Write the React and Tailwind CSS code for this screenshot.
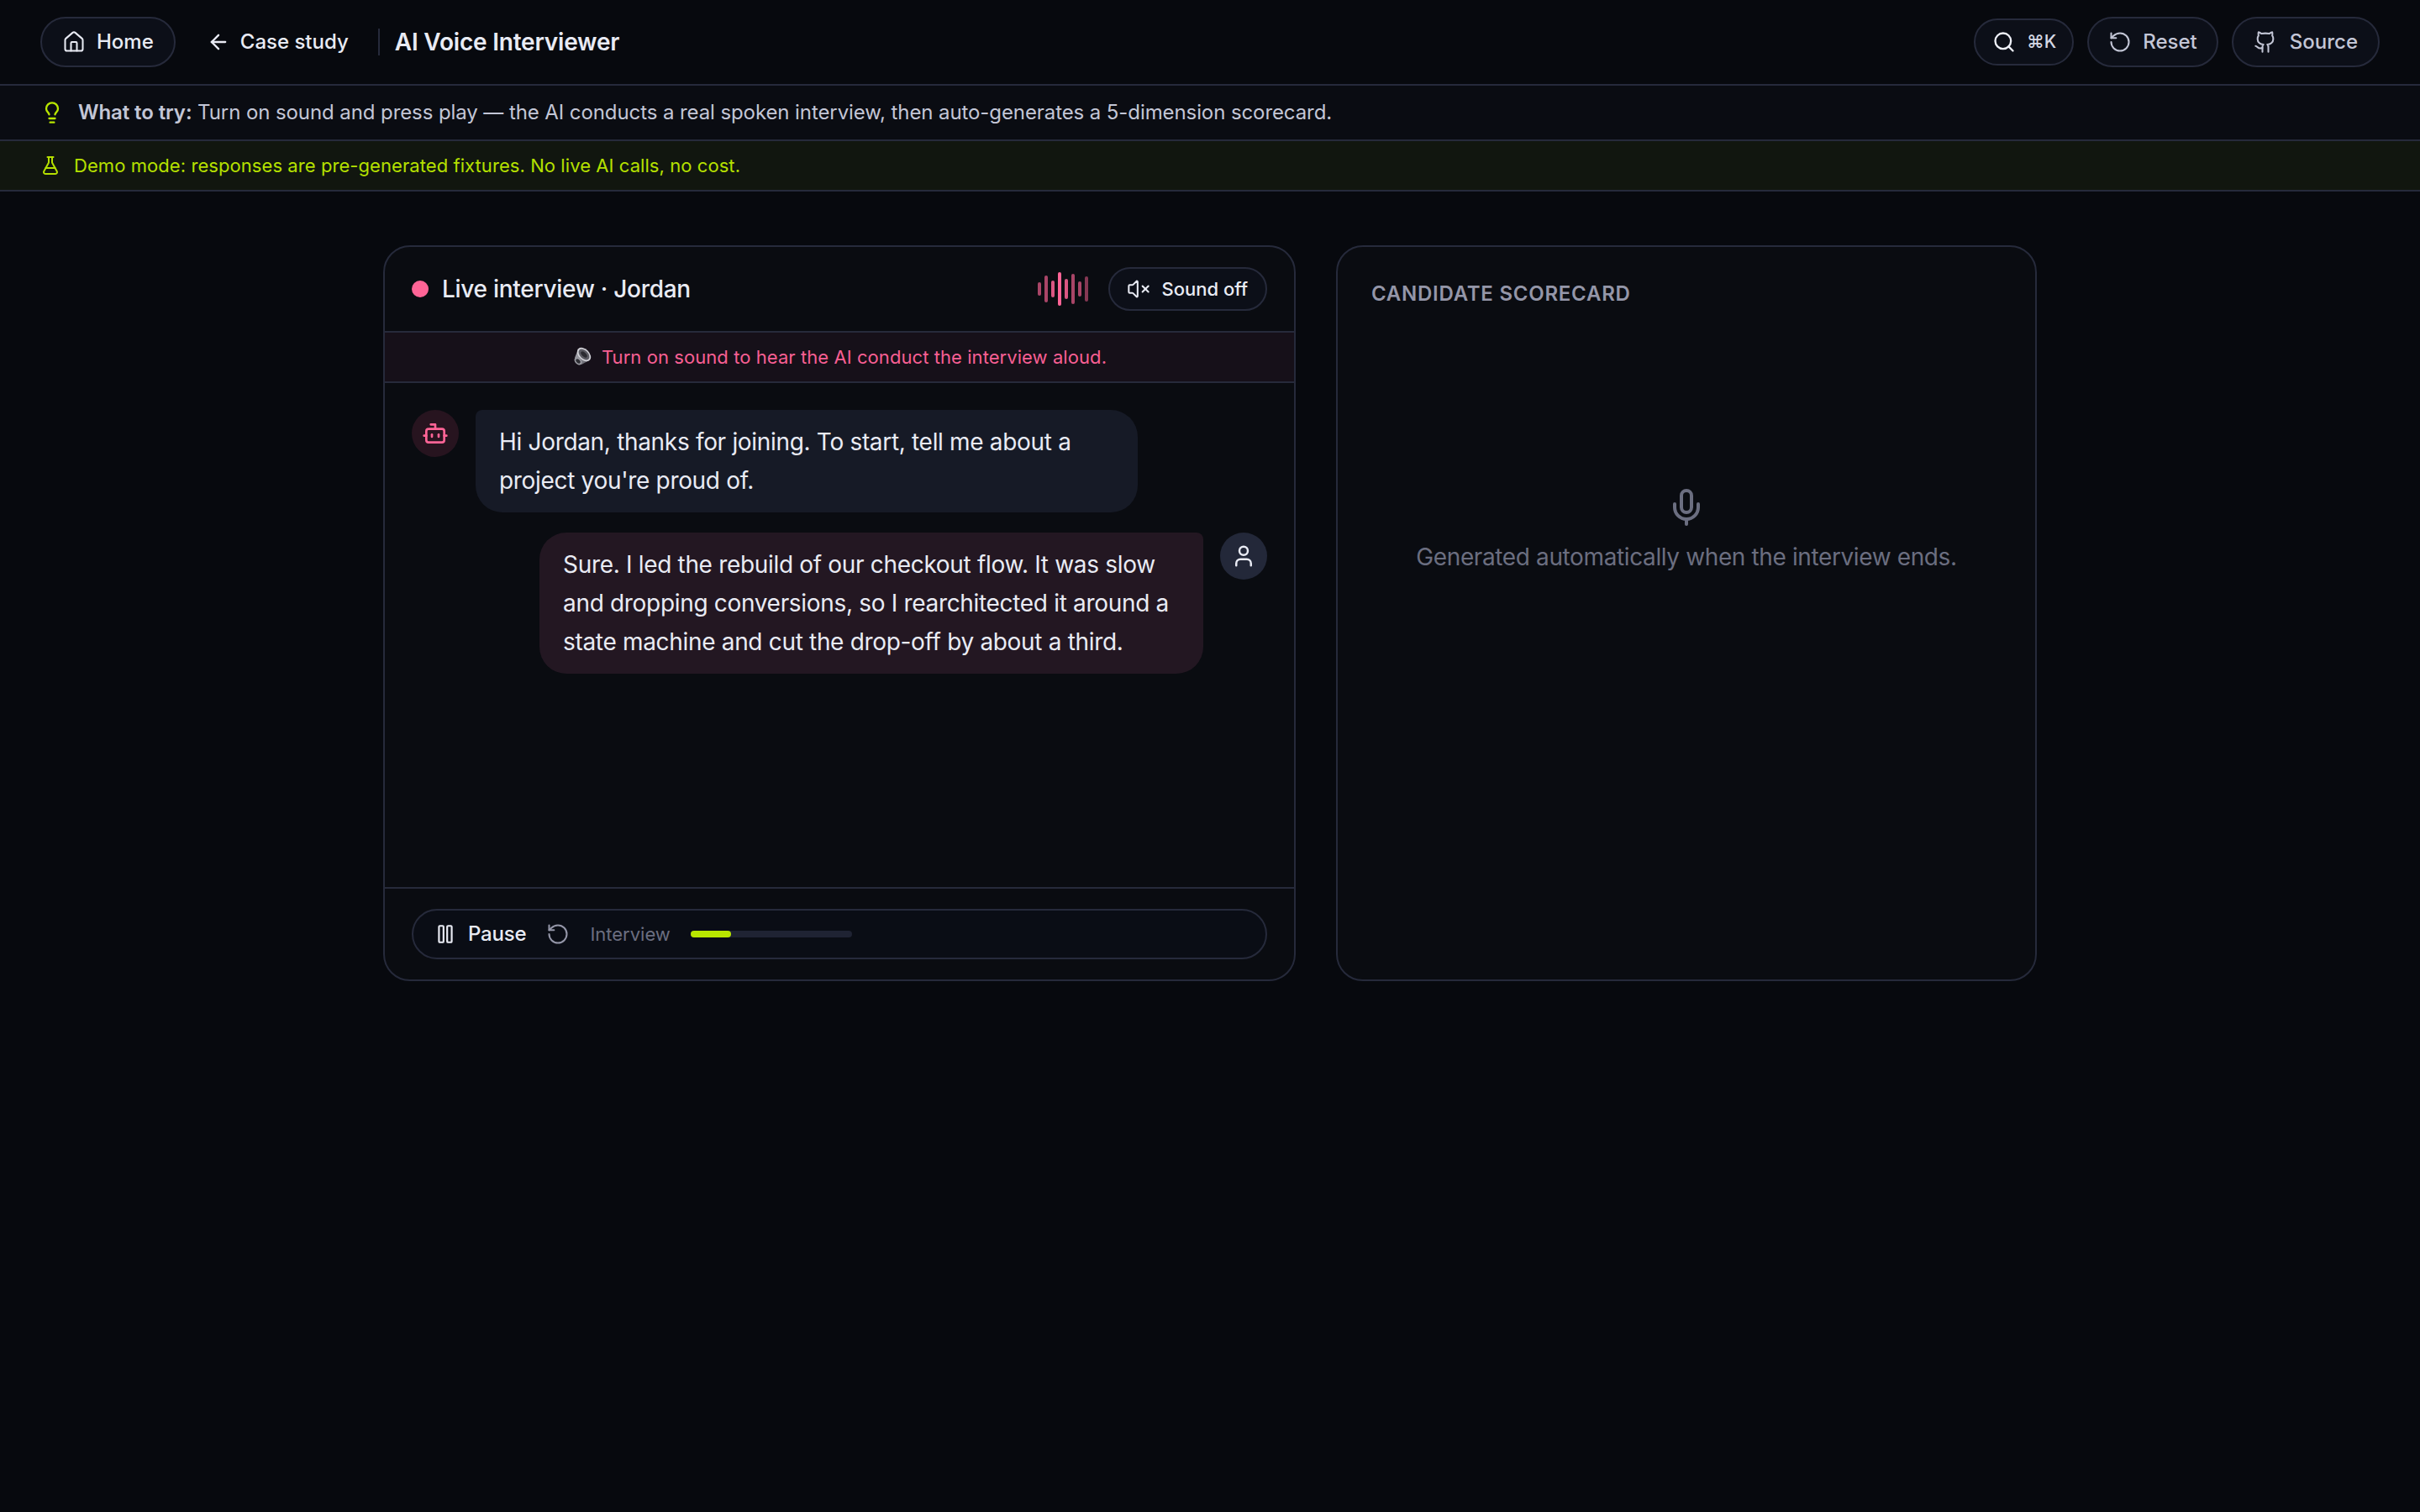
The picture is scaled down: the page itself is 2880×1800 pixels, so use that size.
import React from "react";
import { House, ArrowLeft, Search, RotateCcw, Github, Lightbulb, FlaskConical, VolumeX, Pause, Bot, User, Mic } from "lucide-react";

const bars = [
  ["h-[16px]", "opacity-65"],
  ["h-[32px]", "opacity-65"],
  ["h-[20px]", "opacity-85"],
  ["h-[40px]", "opacity-100"],
  ["h-[24px]", "opacity-85"],
  ["h-[36px]", "opacity-65"],
  ["h-[18px]", "opacity-65"],
  ["h-[30px]", "opacity-50"],
];

function SpeakerEmoji() {
  return (
    <svg width="24" height="24" viewBox="0 0 24 24" aria-hidden="true">
      <defs>
        <linearGradient id="cone" x1="0" y1="0" x2="1" y2="1">
          <stop offset="0" stopColor="#b4b4bc" />
          <stop offset="1" stopColor="#56565e" />
        </linearGradient>
      </defs>
      <path d="M7.3 2.3 L20.7 15.7 L11 21 L3 13Z" fill="url(#cone)" />
      <ellipse cx="14" cy="9" rx="6.4" ry="9.6" transform="rotate(-45 14 9)" fill="#d2d2d8" />
      <ellipse cx="14" cy="9" rx="4.8" ry="7.8" transform="rotate(-45 14 9)" fill="#5c5c64" />
      <ellipse cx="14" cy="9" rx="2.4" ry="4.6" transform="rotate(-45 14 9)" fill="#2b2b31" />
      <ellipse cx="7" cy="17" rx="3.6" ry="5.2" transform="rotate(-45 7 17)" fill="#9a9aa2" />
      <ellipse cx="7" cy="17" rx="2" ry="3.2" transform="rotate(-45 7 17)" fill="#2e2e34" />
    </svg>
  );
}

export default function App() {
  return (
    <div className="min-h-[1800px] bg-[#07090e] font-['Inter','Noto_Sans',sans-serif] text-[#e9ebf4]">
      <header className="flex h-[102px] items-center justify-between border-b-2 border-[#262a3b] bg-[#07090e] px-12">
        <div className="flex items-center">
          <div className="flex h-[60px] items-center gap-[13px] rounded-full border-2 border-[#262a3b] bg-[#0c0f18] px-[24px] text-[24px] font-medium">
            <House size={28} strokeWidth={1.75} />
            <span>Home</span>
          </div>
          <div className="ml-[37px] flex items-center gap-[12px] text-[24px] font-medium">
            <ArrowLeft size={28} strokeWidth={2} />
            <span>Case study</span>
          </div>
          <div className="ml-[35px] h-[32px] w-[2px] bg-[#262a3b]" />
          <div className="ml-[18px] text-[28px] font-semibold tracking-[-0.2px]">AI Voice Interviewer</div>
        </div>
        <div className="flex items-center gap-4">
          <div className="flex h-[56px] items-center gap-[13px] rounded-full border-2 border-[#262a3b] bg-[#0c0f18] pr-[19px] pl-[20px] text-[21px] font-medium text-[#d5d8e4]">
            <Search size={28} strokeWidth={2} className="text-[#eef0f8]" />
            <span>⌘K</span>
          </div>
          <div className="flex h-[60px] items-center gap-[13px] rounded-full border-2 border-[#262a3b] bg-[#0c0f18] px-[23px] text-[24px] font-medium text-[#c3c6d6]">
            <RotateCcw size={28} strokeWidth={1.75} />
            <span>Reset</span>
          </div>
          <div className="flex h-[60px] items-center gap-[15px] rounded-full border-2 border-[#262a3b] bg-[#0c0f18] px-[24px] text-[24px] font-medium text-[#c3c6d6]">
            <Github size={28} strokeWidth={1.75} />
            <span>Source</span>
          </div>
        </div>
      </header>

      <div className="flex h-[66px] items-center gap-[17px] border-b-2 border-[#262a3b] bg-[#0a0c12] pl-[48px] text-[24px] tracking-[-0.09px] text-[#c3c6d6]">
        <Lightbulb size={28} strokeWidth={2} className="text-[#b8e600]" />
        <span>
          <span className="font-semibold">What to try:</span> Turn on sound and press play — the AI conducts a real spoken interview, then auto-generates a 5-dimension scorecard.
        </span>
      </div>

      <div className="flex h-[60px] items-center gap-[16px] border-b-2 border-[#262a3b] bg-[#11160f] pl-[48px] text-[22px] tracking-[0.07px] text-[#b5e000]">
        <FlaskConical size={24} strokeWidth={2} />
        <span>Demo mode: responses are pre-generated fixtures. No live AI calls, no cost.</span>
      </div>

      <main className="mx-auto grid w-[1968px] grid-cols-[1086px_834px] gap-12 pt-16">
        <section className="flex h-[876px] flex-col rounded-[32px] border-2 border-[#262a3b] bg-[#0a0c11]">
          <div className="flex h-[102px] items-center justify-between border-b-2 border-[#262a3b] px-[32px]">
            <div className="flex items-center gap-[16px]">
              <div className="size-[20px] rounded-full bg-[#ff6496]" />
              <span className="text-[28px] font-medium tracking-[-0.28px]">Live interview · Jordan</span>
            </div>
            <div className="flex items-center gap-[24px]">
              <div className="flex items-center gap-[4px]">
                {bars.map(([h, o], i) => (
                  <div key={i} className={`w-[4px] rounded-full bg-[#ff6496] ${h} ${o}`} />
                ))}
              </div>
              <div className="flex h-[52px] items-center gap-[13px] rounded-full border-2 border-[#262a3b] bg-[#0c0f18] pr-[21px] pl-[20px] text-[22px] font-medium">
                <VolumeX size={28} strokeWidth={1.75} />
                <span>Sound off</span>
              </div>
            </div>
          </div>

          <div className="flex h-[60px] items-center justify-center gap-[11px] border-b-2 border-[#262a3b] bg-[#161019] text-[22px] tracking-[0.07px] text-[#f85f93]">
            <SpeakerEmoji />
            <span>Turn on sound to hear the AI conduct the interview aloud.</span>
          </div>

          <div className="flex flex-1 flex-col gap-6 px-[32px] pt-[32px]">
            <div className="flex gap-[20px]">
              <div className="flex size-[56px] shrink-0 items-center justify-center rounded-full bg-[#27141f] text-[#ff6496]">
                <Bot size={32} strokeWidth={2} />
              </div>
              <div className="max-w-[788px] rounded-[32px] rounded-tl-[8px] bg-[#161a26] px-[28px] py-[15px] text-[28px] leading-[46px] tracking-[-0.32px]">
                Hi Jordan, thanks for joining. To start, tell me about a project you're proud of.
              </div>
            </div>
            <div className="flex flex-row-reverse gap-[20px]">
              <div className="flex size-[56px] shrink-0 items-center justify-center rounded-full bg-[#232839] text-[#e9ebf4]">
                <User size={30} strokeWidth={2} />
              </div>
              <div className="max-w-[790px] rounded-[32px] rounded-tr-[8px] bg-[#231722] px-[28px] py-[15px] text-[28px] leading-[46px] tracking-[-0.32px]">
                Sure. I led the rebuild of our checkout flow. It was slow and dropping conversions, so I rearchitected it around a state machine and cut the drop-off by about a third.
              </div>
            </div>
          </div>

          <div className="border-t-2 border-[#262a3b] px-[32px] py-[24px]">
            <div className="flex h-[60px] items-center rounded-full border-2 border-[#262a3b] bg-[#0a0d15] pl-[25px]">
              <Pause size={26} strokeWidth={2} />
              <span className="ml-[14px] text-[24px] font-medium tracking-[-0.2px]">Pause</span>
              <RotateCcw size={28} strokeWidth={1.75} className="ml-[24px] text-[#9496a8]" />
              <span className="ml-[24px] text-[22px] text-[#6b6e80]">Interview</span>
              <div className="ml-[24px] h-[8px] w-[192px] rounded-full bg-[#1f2333]">
                <div className="h-full w-[48px] rounded-full bg-[#b8e600]" />
              </div>
            </div>
          </div>
        </section>

        <section className="flex h-[876px] flex-col rounded-[32px] border-2 border-[#262a3b] bg-[#0a0c11] px-[40px] pt-[40px]">
          <h2 className="text-[24px] leading-[32px] font-semibold tracking-[0.75px] text-[#9496a8]">CANDIDATE SCORECARD</h2>
          <div className="mt-[214px] flex flex-col items-center gap-[14px] text-[#6b6e80]">
            <Mic size={48} strokeWidth={2} />
            <p className="text-[28px] tracking-[-0.38px]">Generated automatically when the interview ends.</p>
          </div>
        </section>
      </main>
    </div>
  );
}
